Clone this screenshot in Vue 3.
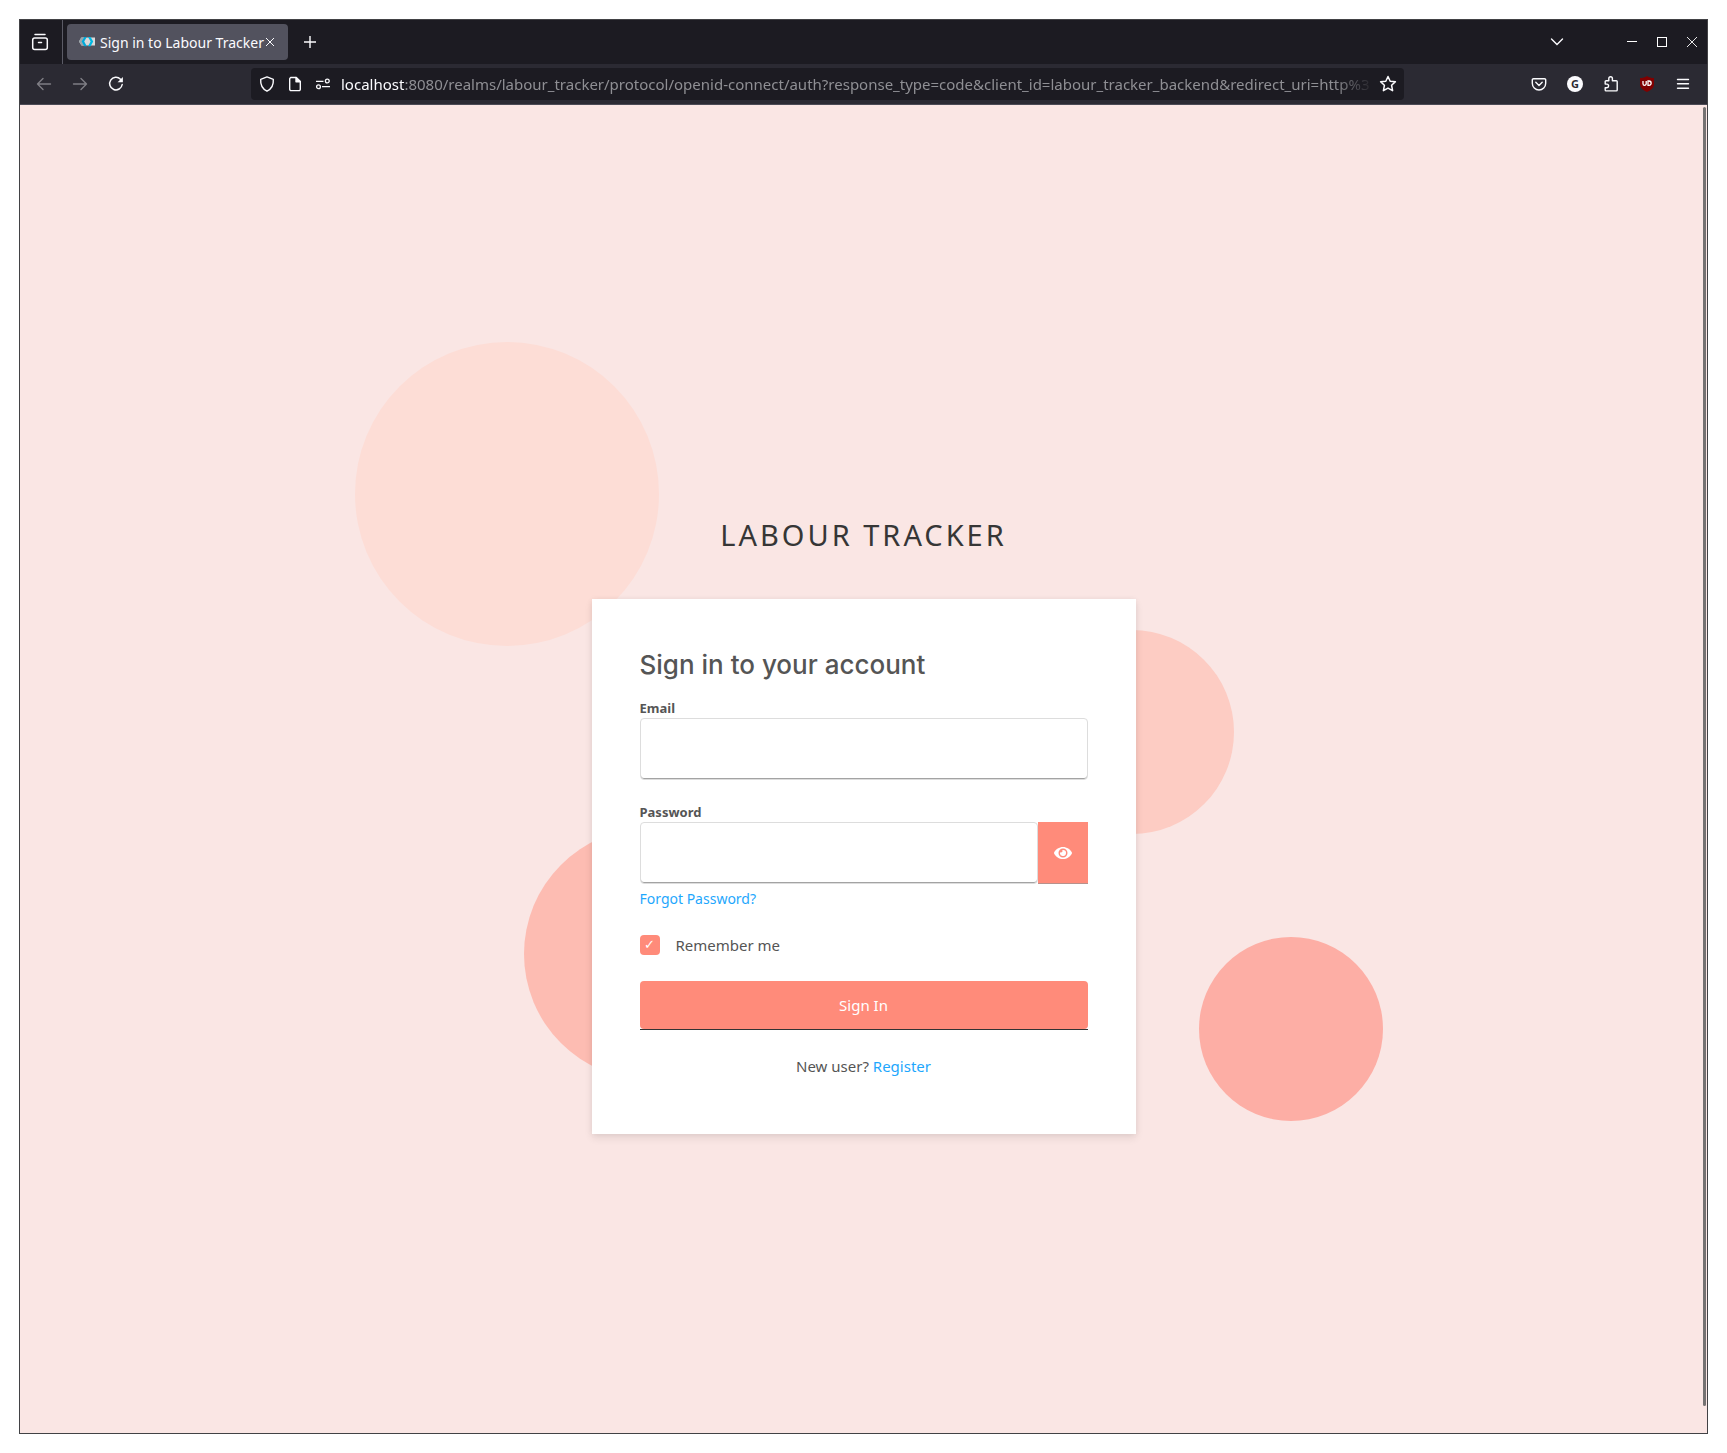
<script setup>
import { ref } from 'vue'

const email = ref('')
const password = ref('')
const remember = ref(true)
const showPassword = ref(false)

const circles = [
  { cx: 487, cy: 389, r: 152, fill: '#fdddd6' },
  { cx: 1112, cy: 627, r: 102, fill: '#fdccc3' },
  { cx: 630, cy: 849, r: 126, fill: '#fdbcb2' },
  { cx: 1271, cy: 924, r: 92, fill: '#fdaea5' },
]
</script>

<template>
  <div class="desktop">
    <div class="window">
      <header class="tabs">
        <button class="view-button" aria-label="Firefox View">
          <svg width="18" height="18" viewBox="0 0 18 18" fill="none" stroke="#fbfbfe" stroke-width="1.5" stroke-linecap="round">
            <path d="M4 1.5h10" />
            <rect x="1.7" y="5" width="14.6" height="11.6" rx="2" />
            <path d="M7.5 9.6h3" />
          </svg>
        </button>
        <div class="tab">
          <svg class="favicon" width="16" height="16" viewBox="0 0 16 16">
            <path d="M2.5 3.500H16v8H2.5L0 7.500z" fill="#d9d9d9" />
            <path d="M2 3.500h3L2.800 7.500l2.200 4H2.500L0 7.500z" fill="#9aa5aa" />
            <path d="M5.200 3h2.600L5.200 7.600l2.600 4.600H5.200L2.600 7.600z" fill="#00a9d8" />
            <path d="M9 3h2.600l2.600 4.600-2.600 4.600H9l2.600-4.600z" fill="#00b8e3" />
          </svg>
          <span class="tab-title">Sign in to Labour Tracker</span>
          <button class="tab-close" aria-label="Close tab">
            <svg width="10" height="10" viewBox="0 0 10 10" stroke="#fbfbfe" stroke-width="1"><path d="M1 1l8 8M9 1l-8 8" /></svg>
          </button>
        </div>
        <button class="tool" aria-label="New tab">
          <svg width="14" height="14" viewBox="0 0 14 14" stroke="#fbfbfe" stroke-width="1.4"><path d="M7 1v12M1 7h12" /></svg>
        </button>
        <span class="grow"></span>
        <button class="tool list-tabs" aria-label="List all tabs">
          <svg width="14" height="14" viewBox="0 0 14 14" fill="none" stroke="#fbfbfe" stroke-width="1.4" stroke-linecap="round"><path d="M1.500 4L7 9.500 12.500 4" /></svg>
        </button>
        <button class="control" aria-label="Minimize">
          <svg width="10" height="10" viewBox="0 0 10 10" stroke="#fff"><path d="M0 4.500h10" /></svg>
        </button>
        <button class="control" aria-label="Maximize">
          <svg width="10" height="10" viewBox="0 0 10 10" fill="none" stroke="#fff"><rect x=".5" y=".5" width="9" height="9" /></svg>
        </button>
        <button class="control" aria-label="Close window">
          <svg width="10" height="10" viewBox="0 0 10 10" stroke="#fff" stroke-width=".9"><path d="M0 0l10 10M10 0L0 10" /></svg>
        </button>
      </header>

      <nav class="toolbar">
        <button class="tool dim" aria-label="Back">
          <svg width="16" height="16" viewBox="0 0 16 16" fill="none" stroke="currentColor" stroke-width="1.400" stroke-linecap="round" stroke-linejoin="round"><path d="M14.500 8h-13M7 2.500L1.500 8 7 13.500" /></svg>
        </button>
        <button class="tool dim" aria-label="Forward">
          <svg width="16" height="16" viewBox="0 0 16 16" fill="none" stroke="currentColor" stroke-width="1.400" stroke-linecap="round" stroke-linejoin="round"><path d="M1.500 8h13M9 2.500L14.500 8 9 13.500" /></svg>
        </button>
        <button class="tool" aria-label="Reload">
          <svg width="16" height="16" viewBox="0 0 16 16" fill="none" stroke="#fbfbfe" stroke-width="1.500" stroke-linecap="round"><path d="M12.500 3.200A6.300 6.300 0 1 0 14.200 8.500" /><path d="M14.900 1v5.300H9.600z" fill="#fbfbfe" stroke="none" /></svg>
        </button>
        <span class="spring"></span>
        <div class="urlbar">
          <button class="url-icon" aria-label="Tracking protection">
            <svg width="16" height="16" viewBox="0 0 16 16" fill="none" stroke="#fbfbfe" stroke-width="1.400" stroke-linejoin="round"><path d="M8 .9L14.300 3.300C14.700 8.500 12.500 13 8 15.200 3.500 13 1.300 8.500 1.700 3.300z" /></svg>
          </button>
          <button class="url-icon" aria-label="Site information">
            <svg width="16" height="16" viewBox="0 0 16 16" fill="none" stroke="#fbfbfe" stroke-width="1.400" stroke-linejoin="round"><path d="M3.700 1.500h5.500l4.100 4.100v7.600a1.400 1.400 0 0 1-1.400 1.400H4.100a1.400 1.400 0 0 1-1.400-1.400V2.900a1.400 1.400 0 0 1 1.400-1.400z" /><path d="M9 1.500v4.300h4.300z" fill="#fbfbfe" /></svg>
          </button>
          <button class="url-icon" aria-label="Permissions">
            <svg width="16" height="16" viewBox="0 0 16 16" fill="none" stroke="#fbfbfe" stroke-width="1.300"><path d="M1 5.300h7.500M7 10.700h8" /><circle cx="12.300" cy="5" r="1.900" /><circle cx="3.500" cy="10.700" r="1.900" /></svg>
          </button>
          <div class="url" role="textbox" aria-label="Address" contenteditable="true" spellcheck="false"><span class="host">localhost</span>:8080/realms/labour_tracker/protocol/openid-connect/auth?response_type=code&amp;client_id=labour_tracker_backend&amp;redirect_uri=http%3</div>
          <button class="url-icon" aria-label="Bookmark">
            <svg width="18" height="18" viewBox="0 0 18 18" fill="none" stroke="#fbfbfe" stroke-width="1.500" stroke-linejoin="round"><path d="M9 1.500l2.200 4.700 5.200.6-3.800 3.500 1 5.400L9 13.100l-4.600 2.600 1-5.400L1.600 6.800l5.200-.6z" /></svg>
          </button>
        </div>
        <span class="spring"></span>
        <button class="tool" aria-label="Pocket">
          <svg width="16" height="16" viewBox="0 0 16 16" fill="none" stroke="#fbfbfe" stroke-width="1.400" stroke-linecap="round" stroke-linejoin="round"><path d="M2.500 2.700h11a1.200 1.200 0 0 1 1.200 1.200v3.400a6.700 6.700 0 0 1-13.400 0V3.900a1.200 1.200 0 0 1 1.200-1.200z" /><path d="M4.800 6.300L8 9.400l3.200-3.100" /></svg>
        </button>
        <button class="tool" aria-label="Grammarly"><span class="badge-g">G</span></button>
        <button class="tool" aria-label="Extensions">
          <svg width="16" height="16" viewBox="0 0 16 16" fill="none" stroke="#fbfbfe" stroke-width="1.400" stroke-linejoin="round"><path d="M5.800 4.700V2.600a1.800 1.800 0 0 1 3.600 0v2.100h3.900a.9.9 0 0 1 .9.9v8.400a.9.9 0 0 1-.9.9H3.100a.9.9 0 0 1-.9-.9v-2.300h1.600a1.800 1.800 0 0 0 0-3.600H2.200V5.600a.9.9 0 0 1 .9-.9z" /></svg>
        </button>
        <button class="tool" aria-label="uBlock Origin">
          <svg width="16" height="16" viewBox="0 0 16 16"><path d="M8 0c2 1.400 4.200 2 7 2.100V8c0 3.800-2.800 6-7 8-4.200-2-7-4.200-7-8V2.100C3.800 2 6 1.400 8 0z" fill="#800000" /><path d="M4 5v2.700a1.600 1.600 0 0 0 3.200 0V5M9 5v4.300h1a2.100 2.100 0 0 0 0-4.300z" fill="none" stroke="#fff" stroke-width="1.300" /></svg>
        </button>
        <button class="tool" aria-label="Menu">
          <svg width="14" height="12" viewBox="0 0 14 12" stroke="#fbfbfe" stroke-width="1.400" stroke-linecap="round"><path d="M1.500 1.500h11M1.500 5.800h11M1.500 10.200h11" /></svg>
        </button>
      </nav>

      <main class="page">
        <svg class="backdrop" viewBox="0 0 1687 1328" preserveAspectRatio="xMidYMid slice" aria-hidden="true">
          <circle v-for="c in circles" :key="c.cx" :cx="c.cx" :cy="c.cy" :r="c.r" :fill="c.fill" />
        </svg>
        <span class="scrollbar"></span>

        <h1 class="brand">Labour Tracker</h1>
        <section class="card">
          <h2 class="heading">Sign in to your account</h2>
          <form @submit.prevent>
            <label class="label" for="email">Email</label>
            <input id="email" v-model="email" class="field" type="text" autocomplete="off" />

            <label class="label second" for="password">Password</label>
            <div class="password">
              <input id="password" v-model="password" class="field" :type="showPassword ? 'text' : 'password'" />
              <button class="reveal" type="button" aria-label="Show password" @click="showPassword = !showPassword">
                <svg width="18" height="16" viewBox="0 0 576 512" fill="#fff"><path d="M572.520 241.400C518.290 135.590 410.930 64 288 64S57.680 135.640 3.480 241.410a32.350 32.350 0 0 0 0 29.190C57.710 376.410 165.070 448 288 448s230.320-71.640 284.520-177.410a32.350 32.350 0 0 0 0-29.190zM288 400a144 144 0 1 1 144-144 143.930 143.930 0 0 1-144 144zm0-240a95.310 95.310 0 0 0-25.310 3.790 47.850 47.850 0 0 1-66.900 66.900A95.780 95.780 0 1 0 288 160z" /></svg>
              </button>
            </div>
            <a class="forgot" href="#">Forgot Password?</a>

            <label class="remember">
              <input v-model="remember" type="checkbox" />
              <span>Remember me</span>
            </label>

            <div class="actions">
              <button class="submit" type="submit">Sign In</button>
            </div>
          </form>
          <p class="register">New user? <a href="#">Register</a></p>
        </section>
      </main>
    </div>
  </div>
</template>

<style>
body {
  margin: 0;
  background: #fff;
}
</style>

<style scoped>
.desktop,
.desktop * {
  box-sizing: border-box;
}

.desktop {
  min-height: 100vh;
  padding: 19px;
  display: flex;
  font-family: 'Noto Sans', 'Open Sans', sans-serif;
}

.window {
  flex: 1;
  min-width: 0;
  display: flex;
  flex-direction: column;
  border: 1px solid #424245;
}

button {
  padding: 0;
  border: 0;
  background: none;
  font: inherit;
  color: inherit;
  display: flex;
  align-items: center;
  justify-content: center;
}

svg {
  display: block;
  flex: none;
}

a {
  color: #1ea7fd;
  text-decoration: none;
}

.tabs {
  height: 44px;
  display: flex;
  align-items: center;
  background: #1c1b22;
  color: #fbfbfe;
}

.view-button {
  width: 43px;
  height: 44px;
  padding-right: 2px;
  border-right: 1px solid #5b5b66;
}

.tab {
  width: 221px;
  height: 36px;
  margin: 0 4px;
  padding: 0 12px;
  display: flex;
  align-items: center;
  border-radius: 4px;
  background: #52525e;
  font-size: 14px;
}

.favicon {
  margin-right: 5px;
}

.tab-title {
  flex: 1;
  white-space: nowrap;
}

.tab-close {
  width: 12px;
  height: 24px;
}

.tool {
  width: 36px;
  height: 36px;
  flex: none;
}

.list-tabs {
  margin-right: 42px;
}

.control {
  width: 30px;
  height: 30px;
  flex: none;
}

.grow {
  flex: 1;
}

.toolbar {
  height: 41px;
  padding: 0 6px;
  display: flex;
  align-items: center;
  background: #2b2a33;
  border-bottom: 1px solid #4b4a55;
  color: #fbfbfe;
}

.dim {
  color: #7f7e85;
}

.spring {
  width: 117px;
}

.urlbar {
  flex: 1;
  min-width: 0;
  height: 32px;
  padding: 0 2px;
  display: flex;
  align-items: center;
  border-radius: 4px;
  background: #1c1b22;
}

.url-icon {
  width: 28px;
  height: 28px;
  flex: none;
}

.url {
  flex: 1;
  min-width: 0;
  margin-left: 4px;
  overflow: hidden;
  white-space: nowrap;
  outline: none;
  font-size: 15px;
  line-height: 24px;
  color: #8f8f94;
  mask-image: linear-gradient(to left, transparent, #000 40px);
}

.host {
  color: #fbfbfe;
}

.badge-g {
  width: 16px;
  height: 16px;
  border-radius: 50%;
  background: #fbfbfe;
  color: #2b2a33;
  font-size: 11px;
  font-weight: 700;
  line-height: 16px;
}

.page {
  flex: 1;
  position: relative;
  display: flex;
  flex-direction: column;
  align-items: center;
  justify-content: center;
  padding: 111px 24px 0;
  background: #fae6e4;
  overflow: hidden;
}

.backdrop {
  position: absolute;
  inset: 0;
  width: 100%;
  height: 100%;
}

.scrollbar {
  position: absolute;
  top: 2px;
  right: 1px;
  bottom: 27px;
  width: 3px;
  border-radius: 2px;
  background: #757272;
}

.brand {
  position: relative;
  margin: 0 0 44px;
  font-size: 29px;
  font-weight: 400;
  line-height: 40px;
  letter-spacing: 3px;
  text-transform: uppercase;
  color: #363636;
}

.card {
  position: relative;
  width: 544px;
  max-width: 100%;
  padding: 48px 48px 56px;
  background: #fff;
  box-shadow: 0 4px 8px rgba(3, 3, 3, 0.09), 0 0 6px rgba(3, 3, 3, 0.05);
  color: #555;
}

.heading {
  margin: 0 0 15px;
  font-family: Inter, sans-serif;
  font-size: 26px;
  font-weight: 500;
  line-height: 36px;
}

.label {
  display: block;
  font-size: 13px;
  font-weight: 700;
  line-height: 20px;
}

.second {
  margin-top: 22px;
}

.field {
  display: block;
  width: 100%;
  height: 62px;
  padding: 0 12px;
  border: 1px solid #ddd;
  border-radius: 4px;
  background: #fff;
  box-shadow: inset 0 -1px 0 #a3a3a3;
  outline: none;
  font: inherit;
  color: inherit;
}

.password {
  display: flex;
}

.password .field {
  flex: 1;
  min-width: 0;
}

.reveal {
  width: 50px;
  background: #ff8b7a;
  border-bottom: 1px solid #b7918c;
}

.forgot {
  display: block;
  margin-top: 4px;
  font-size: 14px;
  line-height: 22px;
}

.remember {
  display: flex;
  align-items: center;
  gap: 16px;
  margin-top: 23px;
  font-size: 15px;
  line-height: 24px;
}

.remember input {
  appearance: none;
  width: 20px;
  height: 20px;
  margin: 0;
  display: grid;
  place-items: center;
  border-radius: 4px;
  background: #ff8b7a;
}

.remember input:checked::before {
  content: '✓';
  font-family: 'DejaVu Sans', sans-serif;
  font-size: 13px;
  line-height: 20px;
  color: #fff;
}

.actions {
  margin-top: 24px;
  border-bottom: 1px solid #333;
}

.submit {
  width: 100%;
  height: 48px;
  border-radius: 4px;
  background: #ff8b7a;
  font-size: 15px;
  color: #fff;
}

.register {
  margin: 24px 0 0;
  font-size: 15px;
  line-height: 24px;
  text-align: center;
}
</style>
